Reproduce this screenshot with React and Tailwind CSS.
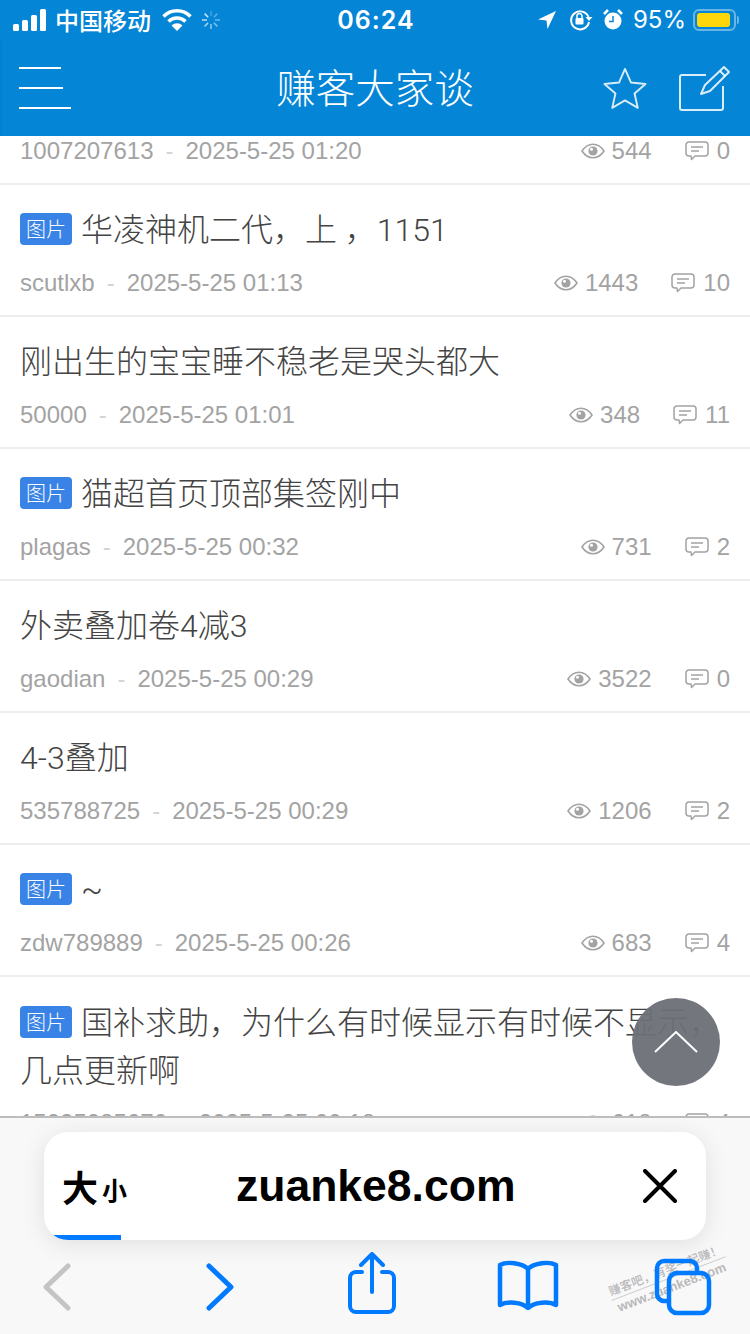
import React from "react";

const sans = { fontFamily: '"Liberation Sans","Noto Sans CJK SC",sans-serif' };
const titleFont = { fontFamily: 'Roboto,"Noto Sans CJK SC",sans-serif' };

const Eye = () => (
  <svg width="24" height="16" viewBox="0 0 24 16" className="shrink-0">
    <path d="M1 8C4 3.5 8 1.2 12 1.2S20 3.5 23 8c-3 4.5-7 6.8-11 6.8S4 12.500 1 8Z" fill="none" stroke="#a3a3a3" strokeWidth="1.6" />
    <circle cx="12" cy="8" r="4.6" fill="#a3a3a3" />
    <circle cx="10.500" cy="6.300" r="1.500" fill="#fff" />
  </svg>
);

const Bubble = () => (
  <svg width="24" height="20" viewBox="0 0 24 20" className="shrink-0">
    <path d="M4 1h16a3 3 0 0 1 3 3v8a3 3 0 0 1-3 3H10l-3.500 3.500-.5-3.500H4a3 3 0 0 1-3-3V4a3 3 0 0 1 3-3Z" fill="none" stroke="#a3a3a3" strokeWidth="1.500" strokeLinejoin="round" />
    <path d="M6 6h12M6 10h8" stroke="#a3a3a3" strokeWidth="1.500" />
  </svg>
);

const Stats = ({ views, comments }) => (
  <div className="flex items-center text-[24px] text-[#a3a3a3]">
    <Eye />
    <span className="ml-[7px]">{views}</span>
    <span className="ml-[33px]"><Bubble /></span>
    <span className="ml-2">{comments}</span>
  </div>
);

const Tag = () => (
  <span className="mr-[9px] inline-flex h-8 w-[52px] items-center justify-center rounded bg-[#3a83e6] align-[4px] text-[20px] leading-none font-light text-white" style={{ fontFamily: '"Noto Sans CJK SC",sans-serif' }}>图片</span>
);

const Meta = ({ user, date, views, comments, className }) => (
  <div className={`${className} flex items-center justify-between text-[24px] text-[#a3a3a3]`} style={sans}>
    <div className="flex items-center">
      <span>{user}</span>
      <span className="mx-3 text-[#d4d4d4]">-</span>
      <span>{date}</span>
    </div>
    <Stats views={views} comments={comments} />
  </div>
);

const Row = ({ title, tag, user, date, views, comments }) => (
  <div className="h-[132px] shrink-0 border-b-2 border-[#ededed] px-5 pt-[21px]">
    <div className="text-[32px] leading-[48px] font-light text-[#444]" style={titleFont}>
      {tag && <Tag />}
      {title}
    </div>
    <Meta className="mt-[11px] h-9" user={user} date={date} views={views} comments={comments} />
  </div>
);

const rows = [
  { title: "华凌神机二代，上 ，1151", tag: true, user: "scutlxb", date: "2025-5-25 01:13", views: "1443", comments: "10" },
  { title: "刚出生的宝宝睡不稳老是哭头都大", user: "50000", date: "2025-5-25 01:01", views: "348", comments: "11" },
  { title: "猫超首页顶部集签刚中", tag: true, user: "plagas", date: "2025-5-25 00:32", views: "731", comments: "2" },
  { title: "外卖叠加卷4减3", user: "gaodian", date: "2025-5-25 00:29", views: "3522", comments: "0" },
  { title: "4-3叠加", user: "535788725", date: "2025-5-25 00:29", views: "1206", comments: "2" },
  { title: "~", tag: true, user: "zdw789889", date: "2025-5-25 00:26", views: "683", comments: "4" },
];

const Spinner = () => (
  <svg width="22" height="22" viewBox="0 0 22 22" className="ml-2">
    {[0, 45, 90, 135, 180, 225, 270, 315].map((a, i) => (
      <line key={a} x1="11" y1="2" x2="11" y2="7" stroke="#fff" strokeOpacity={0.25 + i * 0.08} strokeWidth="1.500" transform={`rotate(${a} 11 11)`} />
    ))}
  </svg>
);

export default function App() {
  return (
    <div className="relative flex h-[1334px] w-[750px] flex-col overflow-hidden bg-white" style={{ fontFamily: '"Noto Sans CJK SC","Liberation Sans",sans-serif' }}>
      <header className="h-[136px] shrink-0 bg-[#0585d6] text-white">
        <div className="flex h-10 items-center justify-between pr-[11px] pl-[13px]">
          <div className="flex w-[250px] items-center">
            <svg width="34" height="22" viewBox="0 0 34 22">
              <rect x="0" y="15" width="6" height="7" rx="1.500" fill="#fff" />
              <rect x="9" y="11" width="6" height="11" rx="1.500" fill="#fff" />
              <rect x="18" y="6" width="6" height="16" rx="1.500" fill="#fff" />
              <rect x="27" y="0" width="6" height="22" rx="1.500" fill="#fff" />
            </svg>
            <span className="ml-2 text-[24px] leading-none font-medium">中国移动</span>
            <svg width="30" height="22" viewBox="0 0 30 22" className="ml-[11px]">
              <path d="M1.500 7.500a19 19 0 0 1 27 0" fill="none" stroke="#fff" strokeWidth="3.500" />
              <path d="M6.500 12.500a12 12 0 0 1 17 0" fill="none" stroke="#fff" strokeWidth="3.500" />
              <path d="M15 22l-5.500-5.500a7.800 7.800 0 0 1 11 0Z" fill="#fff" />
            </svg>
            <Spinner />
          </div>
          <span className="text-[25px] leading-none font-semibold tracking-[1px]" style={{ fontFamily: "Inter,sans-serif" }}>06:24</span>
          <div className="flex w-[250px] items-center justify-end">
            <svg width="20" height="20" viewBox="0 0 20 20"><path d="M19 1 1 9.500l8.500 1 1 8.500Z" fill="#fff" /></svg>
            <svg width="24" height="22" viewBox="0 0 24 22" className="ml-[12px]">
              <path d="M19.500 8A9 9 0 1 0 20 13" fill="none" stroke="#fff" strokeWidth="2" />
              <path d="M16.500 8h7l-3.500 4Z" fill="#fff" />
              <rect x="6.500" y="9" width="8" height="6.500" rx="1" fill="#fff" />
              <path d="M8 9V7a2.500 2.500 0 0 1 5 0v2" fill="none" stroke="#fff" strokeWidth="1.500" />
            </svg>
            <svg width="20" height="22" viewBox="0 0 20 22" className="ml-[10px]">
              <circle cx="10" cy="12" r="8.500" fill="#fff" />
              <path d="M10 7v5.500H6" fill="none" stroke="#0585d6" strokeWidth="1.500" />
              <path d="M1 5l4-4M19 5l-4-4" stroke="#fff" strokeWidth="2.500" />
            </svg>
            <span className="ml-[10px] text-[24px] leading-none" style={{ fontFamily: "Inter,sans-serif" }}>95%</span>
            <div className="ml-[7px] flex h-[22px] w-[43px] items-center rounded-[6px] border-2 border-white/40 p-[2px]">
              <div className="h-full w-[33px] rounded-[3px] bg-[#ffd60a]" />
            </div>
            <div className="ml-px h-[8px] w-[2px] rounded-r bg-white/40" />
          </div>
        </div>
        <div className="flex h-24 items-center border-l-2 border-[#0580cf] pr-[19px] pl-[17px]">
          <div className="flex flex-1 flex-col items-start gap-[18px]">
            <div className="h-0.5 w-[42px] bg-white" />
            <div className="h-0.5 w-[44px] bg-white" />
            <div className="h-0.5 w-[52px] bg-white" />
          </div>
          <h1 className="mb-1 text-[39.500px] leading-none font-light">赚客大家谈</h1>
          <div className="flex flex-1 items-center justify-end">
            <svg width="44" height="42" viewBox="0 0 46 44" fill="none" stroke="#fff" strokeOpacity="0.85" strokeWidth="2" strokeLinejoin="round">
              <path d="M23 2l6.300 14.300 15.200 1.500-11.500 10 3.400 15L23 35l-13.400 7.800 3.400-15-11.500-10 15.200-1.500Z" />
            </svg>
            <svg width="52" height="46" viewBox="0 0 52 46" fill="none" stroke="#fff" strokeOpacity="0.85" strokeWidth="2" className="ml-[32px]">
              <path d="M27 10H3a2 2 0 0 0-2 2v31a2 2 0 0 0 2 2h39a2 2 0 0 0 2-2V21" />
              <path d="M22 29l4-9L45 2l5 5-19 19Z" strokeLinejoin="round" />
              <path d="M41 6l5 5" />
            </svg>
          </div>
        </div>
      </header>

      <main className="min-h-0 flex-1 overflow-hidden">
        <Meta className="h-[49px] items-start border-b-2 border-[#ededed] px-5 leading-[30px]" user="1007207613" date="2025-5-25 01:20" views="544" comments="0" />
        {rows.map((r) => (
          <Row key={r.user} {...r} />
        ))}
        <div className="border-b-2 border-[#ededed] px-5 pt-[22px]">
          <div className="text-[32px] leading-[48px] font-light text-[#444]" style={titleFont}>
            <Tag />
            国补求助，为什么有时候显示有时候不显示，几点更新啊
          </div>
          <Meta className="mt-[10px] h-9" user="15025085676" date="2025-5-25 00:18" views="618" comments="4" />
        </div>
      </main>

      <button className="absolute top-[998px] left-[632px] flex h-[88px] w-[88px] items-center justify-center rounded-full bg-[#6c7076]/95">
        <svg width="44" height="22" viewBox="0 0 44 22" fill="none" stroke="#fff" strokeWidth="2"><path d="M1 21 22 1l21 20" /></svg>
      </button>

      <footer className="relative z-10 h-[218px] shrink-0 overflow-hidden border-t-2 border-[#bdbdbd] bg-[#f8f8f9]">
        <div className="absolute top-[168px] left-[606px] w-[122px] origin-top-left -rotate-[21deg] text-center leading-none text-[#b9b9b9]">
          <div className="border-b border-[#cfcfcf] pb-[3px] text-[12px] font-medium whitespace-nowrap">赚客吧，有奖一起赚！</div>
          <div className="pt-[2px] text-[13px] font-bold whitespace-nowrap" style={sans}>www.zuanke8.com</div>
        </div>
        <div className="relative mx-[44px] mt-[14px] flex h-[108px] items-center overflow-hidden rounded-[24px] bg-white pr-[11px] pl-[18px] shadow-[0_4px_24px_rgba(0,0,0,0.1)]">
          <span className="flex w-[174px] items-end text-[36px] leading-none font-bold text-black">
            大<span className="ml-1 text-[25px] leading-[30px]">小</span>
          </span>
          <span className="text-[44.500px] leading-none font-bold text-black" style={sans}>zuanke8.com</span>
          <svg width="34" height="34" viewBox="0 0 34 34" className="mr-[18px] ml-auto" stroke="#000" strokeWidth="4" strokeLinecap="round"><path d="M2 2l30 30M32 2 2 32" /></svg>
          <div className="absolute bottom-0 left-0 h-[5px] w-[77px] bg-[#007aff]" />
        </div>
        <div className="relative flex items-start pt-[12px] pl-[43px]">
          <svg width="28" height="48" viewBox="0 0 28 48" fill="none" stroke="#c4c4c4" strokeWidth="5" strokeLinecap="round" strokeLinejoin="round" className="mt-[11px]"><path d="M25 3 3 24l22 21" /></svg>
          <svg width="28" height="48" viewBox="0 0 28 48" fill="none" stroke="#007aff" strokeWidth="5" strokeLinecap="round" strokeLinejoin="round" className="mt-[11px] ml-[135px]"><path d="M3 3l22 21L3 45" /></svg>
          <svg width="48" height="62" viewBox="0 0 48 62" fill="none" stroke="#007aff" strokeWidth="4" strokeLinecap="round" strokeLinejoin="round" className="ml-[114px]"><path d="M14 20H8a6 6 0 0 0-6 6v28a6 6 0 0 0 6 6h32a6 6 0 0 0 6-6V26a6 6 0 0 0-6-6h-6M24 40V3M13 13 24 2l11 11" /></svg>
          <svg width="62" height="50" viewBox="0 0 62 50" fill="none" stroke="#007aff" strokeWidth="4.500" strokeLinecap="round" strokeLinejoin="round" className="mt-[8px] ml-[101px]"><path d="M31 9C25 3 10 1 3 5v40c7-4 22-3 28 3 6-6 21-7 28-3V5c-7-4-22-2-28 4ZM31 9v39" /></svg>
          <svg width="58" height="58" viewBox="0 0 58 58" fill="none" stroke="#007aff" strokeWidth="4.500" className="mt-[6px] ml-[95px]">
            <path d="M14 43H10a7 7 0 0 1-7-7V10a7 7 0 0 1 7-7h26a7 7 0 0 1 7 7v4" />
            <rect x="15" y="15" width="40" height="40" rx="8" />
          </svg>
        </div>
      </footer>
    </div>
  );
}
